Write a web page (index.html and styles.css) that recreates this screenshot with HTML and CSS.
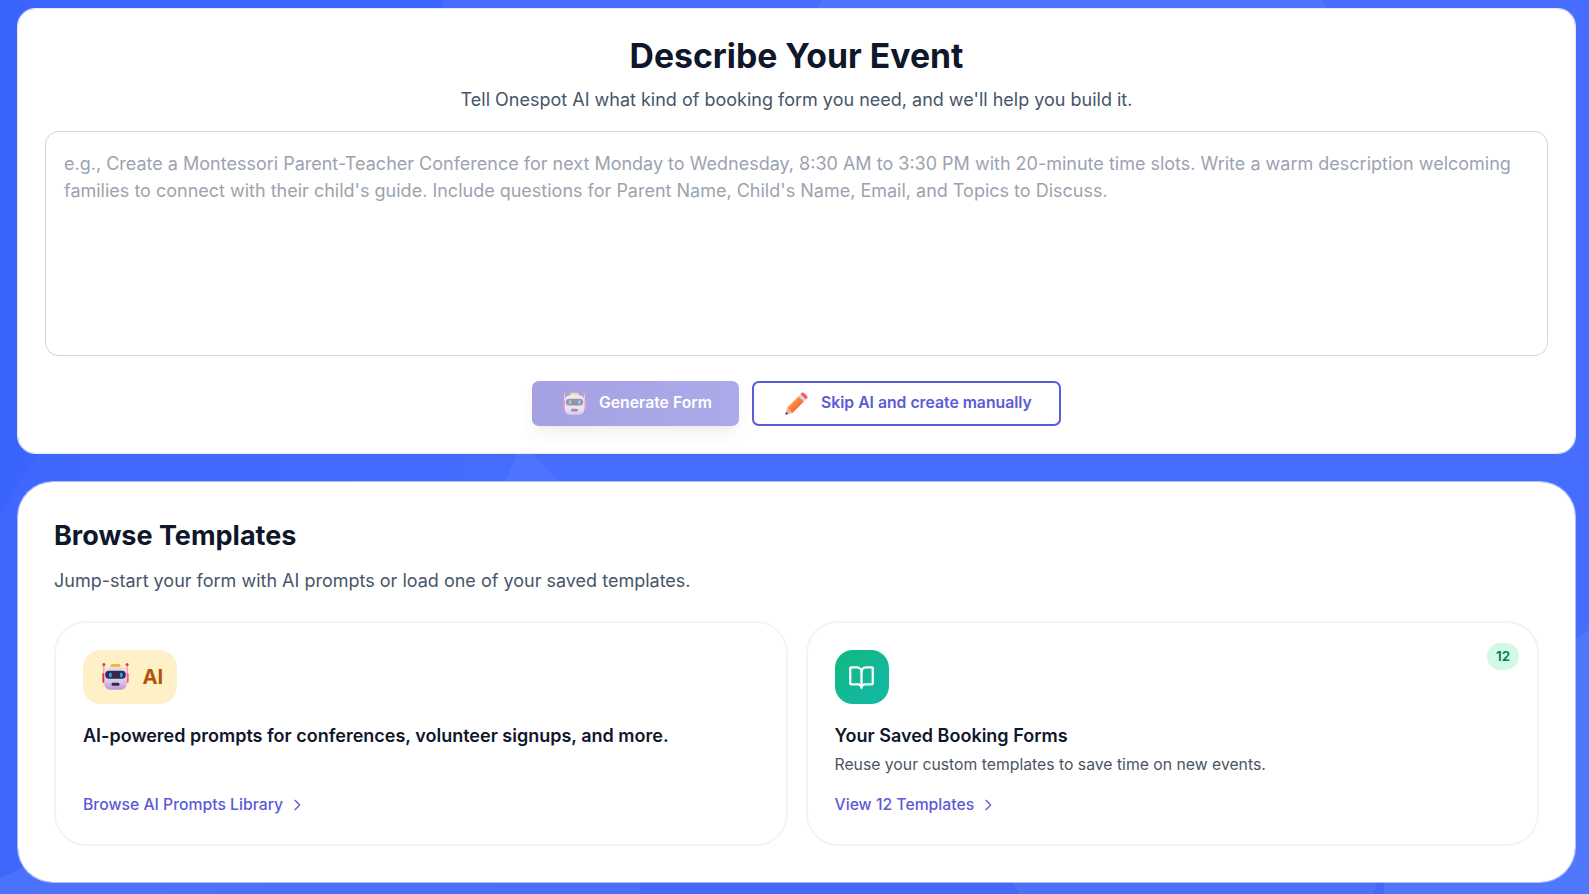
FILE: index.html
```html
<!DOCTYPE html>
<html lang="en">
<head>
<meta charset="utf-8">
<title>Describe Your Event</title>
<link rel="stylesheet" href="styles.css">
</head>
<body>
<svg class="backdrop" viewBox="0 0 1589 894" preserveAspectRatio="none" aria-hidden="true">
  <defs>
    <linearGradient id="base" x1="0" y1="0" x2="1" y2="0"><stop offset="0" stop-color="#3a63fb"/><stop offset=".012" stop-color="#3b64ff"/><stop offset=".28" stop-color="#3d65ff"/></linearGradient>
    <linearGradient id="strip" gradientUnits="userSpaceOnUse" x1="0" y1="0" x2="1589" y2="0"><stop offset="0" stop-color="#4067fb"/><stop offset=".35" stop-color="#476dff"/><stop offset="1" stop-color="#476dff"/></linearGradient>
    <linearGradient id="foot" x1="0" y1="0" x2="1" y2="0"><stop offset="0" stop-color="#4c71fa"/><stop offset="1" stop-color="#4a6ff9"/></linearGradient>
    <symbol id="robot" viewBox="0 0 27 27">
      <path d="M1.8 1.5V12M25.2 1.5V12" stroke="#f78fa9" stroke-width="1.3"/>
      <circle cx="1.9" cy="1.6" r="1.5" fill="#ee2f5d"/><circle cx="25.1" cy="1.6" r="1.5" fill="#ee2f5d"/>
      <rect x=".3" y="10" width="3" height="10" rx="1.4" fill="#f02d69"/><rect x="23.7" y="10" width="3" height="10" rx="1.4" fill="#f46187"/>
      <rect x="8.5" y=".9" width="10" height="5" rx="1.5" fill="#f6b52f"/>
      <rect x="2.2" y="3.7" width="22.6" height="23" rx="6" fill="url(#shell)"/>
      <rect x="3.2" y="7.8" width="20.6" height="8" rx="4" fill="#37284f"/>
      <rect x="7" y="9.7" width="2.7" height="4.6" rx="1" fill="#28a5ee"/><rect x="18" y="9.7" width="2.7" height="4.6" rx="1" fill="#28a5ee"/>
      <rect x="9.5" y="19.8" width="8" height="3" rx="1.4" fill="#37284f"/>
    </symbol>
    <linearGradient id="shell" x1="0" y1="0" x2="0" y2="1"><stop offset="0" stop-color="#e4dcec"/><stop offset=".65" stop-color="#d8cae6"/><stop offset="1" stop-color="#bd92dd"/></linearGradient>
  </defs>
  <rect width="1589" height="894" fill="url(#base)"/>
  <path d="M442 0H1589V894H600Z" fill="#476dff"/>
  <path d="M822 0H1322L1330 20H814Z" fill="#5075fc"/>
  <path d="M0 515L37 454H1589V894H0Z" fill="url(#strip)"/>
  <path d="M517 454H532L560 482H505Z" fill="#4e74ff"/>
  <path d="M1589 630L1570 643V894H1589Z" fill="#5078fc"/>
  <path d="M0 878L40 860H645L640 894H0Z" fill="url(#foot)"/>
  <path d="M640 882H1012L1020 894H640Z" fill="#4468f8"/>
  <path d="M1012 882H1379L1372 894H1020Z" fill="#4c70f7"/>
  <path d="M1379 882H1384V894H1372Z" fill="#4468f8"/>
  <path d="M1384 870H1589V894H1384Z" fill="#5076fb"/>
</svg>
<main class="page">
  <section class="card prompt-card">
    <h1 class="prompt-title">Describe Your Event</h1>
    <p class="prompt-lead">Tell Onespot AI what kind of booking form you need, and we'll help you build it.</p>
    <textarea class="prompt-input" placeholder="e.g., Create a Montessori Parent-Teacher Conference for next Monday to Wednesday, 8:30 AM to 3:30 PM with 20-minute time slots. Write a warm description welcoming families to connect with their child's guide. Include questions for Parent Name, Child's Name, Email, and Topics to Discuss."></textarea>
    <div class="actions">
      <button class="btn btn-primary" type="button"><svg class="btn-icon"><use href="#robot"/></svg>Generate Form</button>
      <button class="btn btn-outline" type="button">
        <svg class="btn-icon pencil" viewBox="0 0 24 24">
          <defs><linearGradient id="wood" x1="0" y1="0" x2="1" y2="1"><stop offset=".25" stop-color="#ffa040"/><stop offset=".5" stop-color="#ff8038"/><stop offset=".75" stop-color="#ea5c34"/></linearGradient></defs>
          <path d="M2.3 16.4L14.8 4L20.2 9.3L7.7 21.8Z" fill="url(#wood)"/>
          <path d="M2.3 16.4L7.7 21.8L1.3 23.6Q.3 23.7.5 22.7Z" fill="#e5b39b"/>
          <path d="M1.1 20.8L3.3 23L1.3 23.6Q.3 23.7.5 22.7Z" fill="#432f48"/>
          <path d="M17.2 1.4Q18.6-.1 20.2 1.3L22.8 3.9Q24.2 5.4 22.8 6.9L21.7 7.9L16.2 2.4Z" fill="#fb5a4c"/>
          <path d="M14 4.7L16.4 2.3L21.8 7.6L19.4 10.1Z" fill="#d9d1de"/>
        </svg>Skip AI and create manually</button>
    </div>
  </section>
  <section class="card templates-card">
    <h2 class="templates-title">Browse Templates</h2>
    <p class="templates-lead">Jump-start your form with AI prompts or load one of your saved templates.</p>
    <div class="template-grid">
      <article class="template">
        <div class="tag"><svg class="tag-icon"><use href="#robot"/></svg>AI</div>
        <h3 class="template-title">AI-powered prompts for conferences, volunteer signups, and more.</h3>
        <a class="template-link">Browse AI Prompts Library<svg class="chevron" viewBox="0 0 24 24"><path d="M9 5l7 7-7 7"/></svg></a>
      </article>
      <article class="template">
        <span class="badge">12</span>
        <div class="tile"><svg class="book" viewBox="0 0 24 24"><path d="M12 7v14"/><path d="M3 18a1 1 0 0 1-1-1V4a1 1 0 0 1 1-1h5a4 4 0 0 1 4 4 4 4 0 0 1 4-4h5a1 1 0 0 1 1 1v13a1 1 0 0 1-1 1h-6a3 3 0 0 0-3 3 3 3 0 0 0-3-3z"/></svg></div>
        <h3 class="template-title">Your Saved Booking Forms</h3>
        <p class="template-text">Reuse your custom templates to save time on new events.</p>
        <a class="template-link">View 12 Templates<svg class="chevron" viewBox="0 0 24 24"><path d="M9 5l7 7-7 7"/></svg></a>
      </article>
    </div>
  </section>
</main>
</body>
</html>
```
FILE: styles.css
```css
* { box-sizing: border-box; margin: 0; }
html { font-size: 18px; }
body {
  height: 894px;
  overflow: hidden;
  font-family: Inter, "Liberation Sans", sans-serif;
  line-height: 27px;
  color: #0f172a;
  background: #476dff;
}
.backdrop { position: absolute; inset: 0; width: 100%; height: 894px; z-index: -1; }
.page { display: flex; flex-direction: column; gap: 27px; padding: 8px 13px 0 17px; }
.card { background: #fff; background-clip: padding-box; }
.prompt-card {
  display: flex;
  flex-direction: column;
  height: 446px;
  padding: 27px;
  border: 1px solid #e2e8f0;
  border-radius: 18px;
  text-align: center;
}
.prompt-title { font-size: 33.75px; line-height: 40.5px; font-weight: 700; }
.prompt-lead { margin: 9px 0 18px; font-size: 18px; color: #475569; }
.prompt-input {
  display: block;
  width: 100%;
  height: 225px;
  padding: 18px;
  border: 1px solid #cbd5e1;
  border-radius: 13.5px;
  resize: none;
  outline: none;
  background: #fff;
  font: 400 18px/27px Inter, "Liberation Sans", sans-serif;
}
.prompt-input::placeholder { color: #9ca3af; }
.actions { display: flex; justify-content: center; gap: 13px; margin-top: auto; }
.btn {
  display: flex;
  align-items: center;
  height: 45px;
  border-radius: 6.75px;
  font: 600 15.75px/22.5px Inter, "Liberation Sans", sans-serif;
}
.btn-primary {
  width: 207px;
  padding: 0 0 0 31px;
  border: 0;
  background: linear-gradient(90deg, #4b46c6, #5b59d6);
  color: #fff;
  opacity: .5;
  box-shadow: 0 10px 15px -3px rgb(0 0 0 / .1), 0 4px 6px -4px rgb(0 0 0 / .1);
}
.btn-outline { width: 309px; padding: 0 0 0 31px; border: 2px solid #5b5bd6; background: #fff; color: #5b5bd6; }
.btn-icon { width: 23px; height: 23px; margin-right: 13px; flex: none; }
.templates-card {
  height: 402px;
  padding: 36px;
  border: 1px solid rgb(255 255 255 / .55);
  border-radius: 36px;
}
.templates-title { font-size: 27px; line-height: 36px; font-weight: 700; }
.templates-lead { margin: 13px 0 27px; font-size: 18px; color: #475569; }
.template-grid { display: grid; grid-template-columns: 1fr 1fr; gap: 18px; }
.template {
  position: relative;
  display: flex;
  flex-direction: column;
  align-items: flex-start;
  height: 225px;
  padding: 27px;
  border: 2px solid #f3f4f6;
  border-radius: 32px;
}
.tag {
  display: flex;
  align-items: center;
  gap: 14px;
  width: 94px;
  height: 54px;
  padding: 0 0 2px 18.5px;
  border-radius: 18px;
  background: #fef1c7;
  color: #b45309;
  font-size: 20.25px;
  font-weight: 700;
}
.tag-icon { width: 27px; height: 27px; }
.tile {
  display: flex;
  align-items: center;
  justify-content: center;
  width: 54px;
  height: 54px;
  border-radius: 18px;
  background: linear-gradient(135deg, #10b981, #14b8a6);
}
.book, .chevron { fill: none; stroke: currentColor; stroke-width: 2; stroke-linecap: round; stroke-linejoin: round; }
.book { width: 27px; height: 27px; color: #fff; }
.template-title { margin-top: 18px; font-size: 18px; font-weight: 600; }
.template-text { margin-top: 5px; font-size: 15.75px; line-height: 22.5px; color: #4b5563; }
.template-link {
  display: flex;
  align-items: center;
  gap: 5.5px;
  margin-top: auto;
  font-size: 15.75px;
  line-height: 25px;
  font-weight: 500;
  color: #5b5bd6;
}
.chevron { width: 16px; height: 16px; }
.badge {
  position: absolute;
  top: 20px;
  right: 18px;
  width: 32px;
  height: 27px;
  border-radius: 14px;
  background: #d1fae5;
  color: #047857;
  font-size: 13.5px;
  font-weight: 600;
  text-align: center;
}
```
